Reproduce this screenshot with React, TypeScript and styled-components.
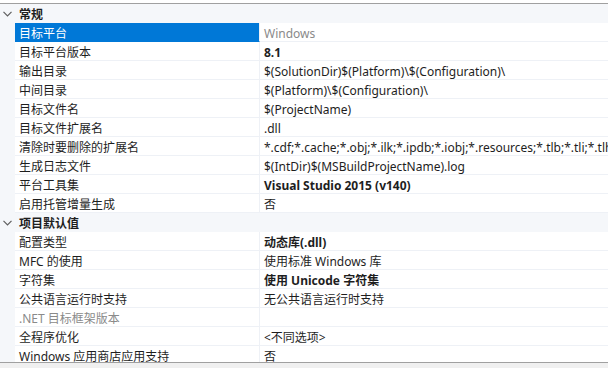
import styled, { createGlobalStyle } from 'styled-components';

type Prop = {
	name: string;
	value: string;
	bold?: boolean;
	dim?: boolean;
	nameDim?: boolean;
	selected?: boolean;
};

type Group = {
	title: string;
	props: Prop[];
};

const groups: Group[] = [
	{
		title: '常规',
		props: [
			{ name: '目标平台', value: 'Windows', dim: true, selected: true },
			{ name: '目标平台版本', value: '8.1', bold: true },
			{ name: '输出目录', value: '$(SolutionDir)$(Platform)\\$(Configuration)\\' },
			{ name: '中间目录', value: '$(Platform)\\$(Configuration)\\' },
			{ name: '目标文件名', value: '$(ProjectName)' },
			{ name: '目标文件扩展名', value: '.dll' },
			{
				name: '清除时要删除的扩展名',
				value: '*.cdf;*.cache;*.obj;*.ilk;*.ipdb;*.iobj;*.resources;*.tlb;*.tli;*.tlh;*.tmp;*.rsp;*.pgc;*.pgd;*.meta',
			},
			{ name: '生成日志文件', value: '$(IntDir)$(MSBuildProjectName).log' },
			{ name: '平台工具集', value: 'Visual Studio 2015 (v140)', bold: true },
			{ name: '启用托管增量生成', value: '否' },
		],
	},
	{
		title: '项目默认值',
		props: [
			{ name: '配置类型', value: '动态库(.dll)', bold: true },
			{ name: 'MFC 的使用', value: '使用标准 Windows 库' },
			{ name: '字符集', value: '使用 Unicode 字符集', bold: true },
			{ name: '公共语言运行时支持', value: '无公共语言运行时支持' },
			{ name: '.NET 目标框架版本', value: '', nameDim: true },
			{ name: '全程序优化', value: '<不同选项>' },
			{ name: 'Windows 应用商店应用支持', value: '否' },
		],
	},
];

const GlobalStyle = createGlobalStyle`
	html, body {
		margin: 0;
		padding: 0;
		background: #ffffff;
		overflow: hidden;
	}
	body {
		font-family: 'Noto Sans', 'Noto Sans CJK SC', sans-serif;
		font-size: 12px;
		color: #1e1e1e;
	}
`;

const Frame = styled.div`
	width: 608px;
	height: 368px;
	display: flex;
	flex-direction: column;
	padding-top: 3px;
	box-sizing: border-box;
`;

const Grid = styled.div`
	flex: none;
	height: 358px;
	overflow: hidden;
	border-top: 1px solid #a0a0a0;
	border-bottom: 1px solid #a0a0a0;
	background: #f5f7fa;
`;

const Footer = styled.div`
	flex: 1;
	background: #f0f0f0;
`;

const CategoryRow = styled.div`
	height: 19px;
	display: flex;
	background: #f5f7fa;
	font-weight: 700;
`;

const Chevron = styled.span`
	width: 15px;
	height: 19px;
	display: flex;
	align-items: center;
	justify-content: center;
	padding-top: 1px;
	box-sizing: border-box;
	flex: none;
`;

const Title = styled.span`
	padding: 2px 0 0 4px;
	line-height: 18px;
`;

const Row = styled.div`
	height: 19px;
	display: flex;
	background: #f5f7fa;
`;

const Gutter = styled.div`
	width: 15px;
	flex: none;
`;

const Cell = styled.div`
	height: 19px;
	box-sizing: border-box;
	padding: 2px 0 0 4px;
	line-height: 17px;
	white-space: nowrap;
	overflow: hidden;
	background: #ffffff;
	border-bottom: 1px solid #eef1f6;
`;

const NameCell = styled(Cell)<{ $selected?: boolean; $dim?: boolean }>`
	width: 245px;
	flex: none;
	background: ${(p) => (p.$selected ? '#0078d7' : '#ffffff')};
	color: ${(p) => (p.$selected ? '#ffffff' : p.$dim ? '#8a8a8a' : '#1e1e1e')};
	border-bottom-color: ${(p) => (p.$selected ? '#0078d7' : '#eef1f6')};
	border-right: 1px solid #eef1f6;
`;

const ValueCell = styled(Cell)<{ $bold?: boolean; $dim?: boolean }>`
	flex: 1;
	min-width: 0;
	font-weight: ${(p) => (p.$bold ? 700 : 400)};
	color: ${(p) => (p.$dim ? '#8a8a8a' : '#1e1e1e')};
`;

const ChevronIcon = () => (
	<svg width='9' height='6' viewBox='0 0 9 6'>
		<path d='M0.5 0.8 L4.5 4.8 L8.5 0.8' fill='none' stroke='#5f5f5f' strokeWidth='1.2' />
	</svg>
);

export default function App() {
	return (
		<>
			<GlobalStyle />
			<Frame>
				<Grid>
					{groups.map((group) => (
						<section key={group.title}>
							<CategoryRow>
								<Chevron>
									<ChevronIcon />
								</Chevron>
								<Title>{group.title}</Title>
							</CategoryRow>
							{group.props.map((prop) => (
								<Row key={prop.name}>
									<Gutter />
									<NameCell $selected={prop.selected} $dim={prop.nameDim}>
										{prop.name}
									</NameCell>
									<ValueCell $bold={prop.bold} $dim={prop.dim}>
										{prop.value}
									</ValueCell>
								</Row>
							))}
						</section>
					))}
				</Grid>
				<Footer />
			</Frame>
		</>
	);
}
